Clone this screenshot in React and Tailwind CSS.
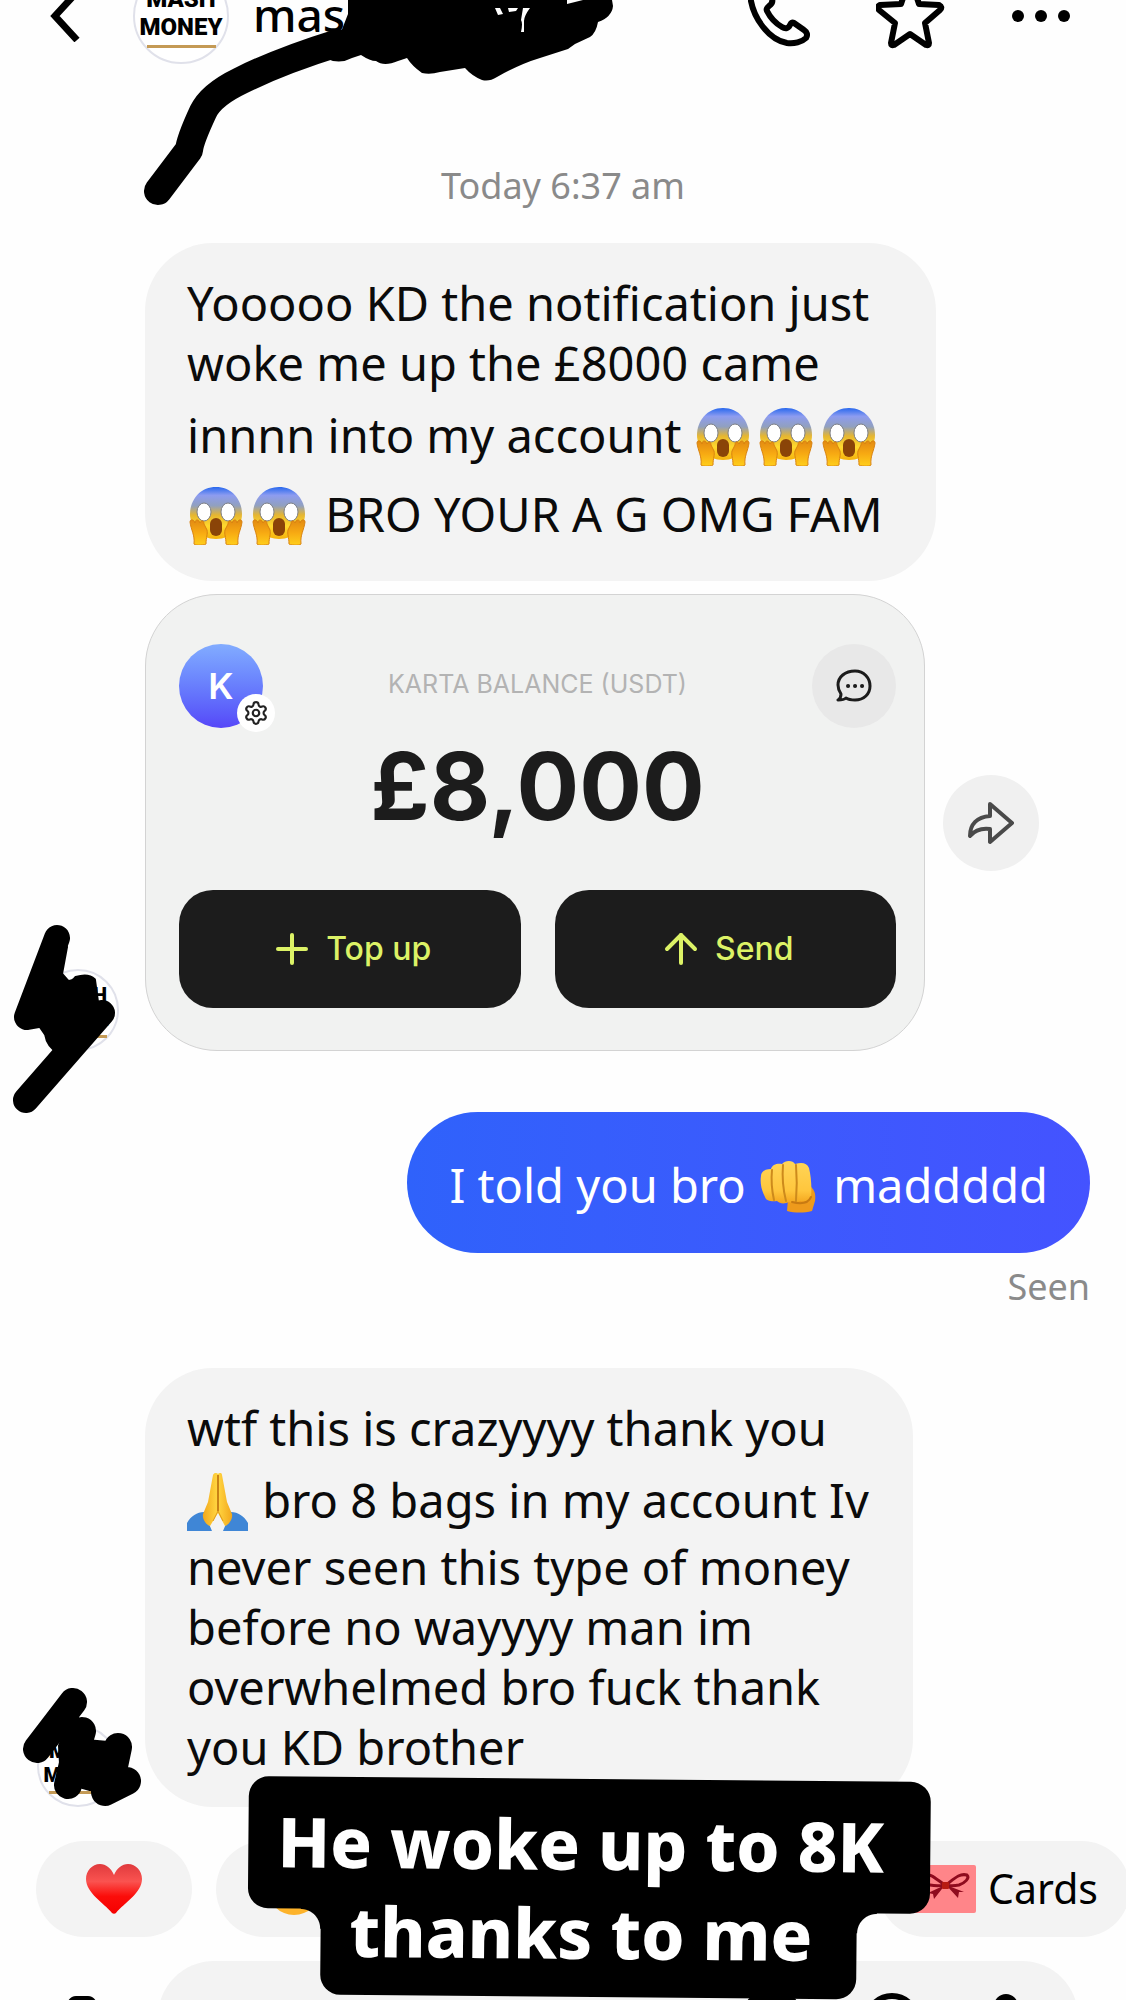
import React, { useId } from 'react';
import { ArrowUp, Plus, Settings } from 'lucide-react';

const emojiClass = 'inline-block h-[58px] w-[63px] mt-[15px] mb-[6px] align-[-19px]';

const Scream = () => {
  const id = useId();
  return (
    <svg viewBox="0 0 63 58" className={emojiClass} role="img" aria-label="screaming face">
      <defs>
        <linearGradient id={`${id}-head`} x1="0" y1="0" x2="0" y2="1">
          <stop offset="0" stopColor="#2868ee" />
          <stop offset="0.16" stopColor="#8d9cf0" />
          <stop offset="0.36" stopColor="#91a0bf" />
          <stop offset="0.54" stopColor="#e6b630" />
          <stop offset="0.75" stopColor="#ffd92e" />
          <stop offset="1" stopColor="#f5b20d" />
        </linearGradient>
        <linearGradient id={`${id}-hand`} x1="0" y1="0" x2="0" y2="1">
          <stop offset="0" stopColor="#e28a12" />
          <stop offset="0.5" stopColor="#f7a912" />
          <stop offset="1" stopColor="#ffcf1c" />
        </linearGradient>
      </defs>
      <path d="M29 0C13 0 3 13 3 27c0 13 10 25 26 25S55 40 55 27C55 13 45 0 29 0Z" fill={`url(#${id}-head)`} />
      <ellipse cx="17" cy="25" rx="7" ry="9" fill="#fff" stroke="#7d7f86" strokeWidth="1" />
      <ellipse cx="41" cy="25" rx="7" ry="9" fill="#fff" stroke="#7d7f86" strokeWidth="1" />
      <rect x="23" y="31" width="12" height="18" rx="6" fill="#8a4408" />
      <path d="M3 35c0-3 4-3 5 1 0-4 4-4 5 0 1-3 4-3 4 1l3 6c1 4-1 7-1 14 0 1-11 2-12 0C8 48 4 43 3 35Z" fill={`url(#${id}-hand)`} stroke="#d98210" strokeWidth="1" />
      <path d="M55 35c0-3-4-3-5 1 0-4-4-4-5 0-1-3-4-3-4 1l-3 6c-1 4 1 7 1 14 0 1 11 2 12 0C50 48 54 43 55 35Z" fill={`url(#${id}-hand)`} stroke="#d98210" strokeWidth="1" />
    </svg>
  );
};

const Fist = () => (
  <svg viewBox="0 0 63 58" className={emojiClass} role="img" aria-label="fist">
    <defs>
      <linearGradient id="fist" x1="0" y1="0" x2="0" y2="1">
        <stop offset="0" stopColor="#ffd558" />
        <stop offset="0.7" stopColor="#ffc63d" />
        <stop offset="1" stopColor="#f3a51d" />
      </linearGradient>
    </defs>
    <path d="M48 26c9 4 10 10 9 17l-3 10c-8 2-17 2-25 0l1-12Z" fill="#ee9a1c" />
    <path d="M3 18c0-5 5-7 10-7 1-5 7-6 11-5 3-4 11-4 13 0 7-2 12-1 14 4 2 8 3 20 2 28-1 5-6 6-11 5-3 2-8 3-11 1-4 2-9 2-12-1-5 1-11 0-12-4C3 31 2 24 3 18Z" fill="url(#fist)" />
    <path d="M14 12c-1 10 0 21 2 30M25 7c-1 12 0 24 3 36M38 7c1 12 1 24 0 36" fill="none" stroke="#cd8a1c" strokeWidth="2" strokeLinecap="round" />
    <path d="M34 44c8 2 16 2 19-5" fill="none" stroke="#c87a12" strokeWidth="2" strokeLinecap="round" />
  </svg>
);

const Pray = () => (
  <svg viewBox="0 0 63 58" className={emojiClass} role="img" aria-label="folded hands">
    <defs>
      <linearGradient id="pray" x1="0" y1="0" x2="1" y2="0">
        <stop offset="0" stopColor="#f2a71c" />
        <stop offset="0.45" stopColor="#ffd23e" />
        <stop offset="0.55" stopColor="#ffd23e" />
        <stop offset="1" stopColor="#f2a71c" />
      </linearGradient>
    </defs>
    <path d="M0 50c4-7 10-11 17-11l8 19H0ZM61 50c-4-7-10-11-17-11l-8 19h25Z" fill="#3f86d6" />
    <path d="M31 1c-2-2-4-1-5 1l-5 27-5 12c-1 5 3 11 7 12l8-13 7 13c4-1 8-7 7-12l-5-12-5-27c0-2-2-3-4-1Z" fill="url(#pray)" />
    <path d="M31 2v36" stroke="#c98216" strokeWidth="2" />
    <path d="M31 38l-5 10M31 38l5 10" stroke="#e09a1b" strokeWidth="1" />
  </svg>
);

const Heart = () => (
  <svg viewBox="0 0 56 50" className="h-[50px] w-14">
    <defs>
      <linearGradient id="heart" x1="0" y1="0" x2="0" y2="1">
        <stop offset="0" stopColor="#e03a3d" />
        <stop offset="0.35" stopColor="#fa5350" />
        <stop offset="0.65" stopColor="#fb0d0a" />
        <stop offset="1" stopColor="#f50000" />
      </linearGradient>
    </defs>
    <path d="M28 11C25 4 20 0 14 0 6 0 0 7 0 15c0 14 18 24 26 34 1 1 3 1 4 0 8-10 26-20 26-34C56 7 50 0 42 0c-6 0-11 4-14 11Z" fill="url(#heart)" />
  </svg>
);

const Smile = () => (
  <svg viewBox="0 0 54 54" className="size-[54px]">
    <circle cx="27" cy="27" r="26" fill="#fdb32b" />
    <path d="M13 23h28c0 9-6 15-14 15s-14-6-14-15Z" fill="#7a3b10" />
    <path d="M12 16q5-6 10 0M32 16q5-6 10 0" fill="none" stroke="#7a3b10" strokeWidth="3" strokeLinecap="round" />
  </svg>
);

const ThumbsUp = () => (
  <svg viewBox="0 0 54 54" className="size-[54px]">
    <path d="M6 26h10L27 6c6-2 8 3 6 9l-2 8h14c6 0 6 6 3 8 2 3 1 6-2 7 1 3 0 6-3 6 0 3-2 5-5 5H24c-4 0-6-3-9-3H6Z" fill="#fdc52f" />
  </svg>
);

const GiftCard = () => (
  <svg viewBox="0 0 66 48" className="h-12 w-[66px]">
    <rect width="66" height="48" rx="2" fill="#ff8589" />
    <path d="M35 20C26 14 21 8 12 9 6 11 12 19 20 20c5 1 10 1 15 0ZM36 20C44 14 49 8 57 10 60 13 55 18 49 20c-5 1-9 1-13 0Z" fill="none" stroke="#8f0b1e" strokeWidth="3" />
    <path d="M35 20 18 28l5 1 1 5ZM36 20l12 13 1-6 5 0Z" fill="#8f0b1e" />
    <rect x="32" y="17" width="7" height="7" rx="1" fill="#b81a12" />
  </svg>
);

const ChatDots = () => (
  <svg viewBox="0 0 36 34" className="h-[34px] w-9" fill="none" stroke="#1c1c1c" strokeWidth="3" strokeLinejoin="round" strokeLinecap="round">
    <path d="M19 2C9 2 2 8 2 16c0 4 1 6 3 9 0 3-1 5-3 6 4 0 6 0 8-2 3 2 6 2 9 2 9 0 15-6 15-14S28 2 19 2Z" />
    <path d="M12 17h.1M19 17h.1M26 17h.1" strokeWidth="4" />
  </svg>
);

const ShareArrow = () => (
  <svg viewBox="0 0 46 44" className="h-11 w-[46px]" fill="none" stroke="#4a4a4a" strokeWidth="4" strokeLinejoin="round">
    <path d="M22 3 44 22 22 41V28C14 27 7 29 2 35 2 23 9 16 22 15Z" />
  </svg>
);

const Scribble = ({ viewBox, line, fill, width }) => (
  <svg viewBox={viewBox} className="absolute inset-0 size-full overflow-visible" aria-hidden="true">
    <path d={line} fill="none" stroke="#000" strokeWidth={width} strokeLinecap="round" strokeLinejoin="round" />
    <path d={fill} fill="#000" stroke="#000" strokeWidth="4" strokeLinejoin="round" />
  </svg>
);

const Avatar = ({ large = false, children }) => (
  <div className={large ? 'relative size-24 shrink-0' : 'relative size-[82px] shrink-0'}>
    <div className="flex size-full flex-col items-center justify-center rounded-full border-2 border-[#e0e1ea] bg-white font-[Roboto,sans-serif] font-black text-black">
      <span className={large ? 'text-2xl leading-[28px]' : 'text-xl leading-6'}>MASH</span>
      <span className={large ? 'text-2xl leading-[28px]' : 'text-xl leading-6'}>MONEY</span>
      <span className="mt-1 h-[3px] w-3/4 bg-[#c49a55]" />
    </div>
    {children}
  </div>
);

const Bubble = ({ children }) => (
  <div className="w-full rounded-[68px] bg-[#f3f3f3] px-[42px] py-[30px] text-[47px] leading-[60px] text-[#0b0b0b]">
    {children}
  </div>
);

const BalanceCard = () => (
  <div className="w-[780px] rounded-[72px] border border-[#d3d3d3] bg-[#f1f2f1] pt-[49px] pr-7 pb-[42px] pl-[33px] font-[Inter,sans-serif]">
    <div className="flex items-start justify-between">
      <div className="relative flex size-[84px] items-center justify-center rounded-full bg-linear-to-b from-[#82acff] to-[#5646f8] text-[36px] font-semibold text-white">
        K
        <span className="absolute -right-3 -bottom-1 flex size-[38px] items-center justify-center rounded-full bg-white">
          <Settings size={26} strokeWidth={2} className="text-[#222]" />
        </span>
      </div>
      <div className="flex flex-col items-center pt-[25px]">
        <p className="text-[25px] leading-[30px] text-[#b3b3b3]">KARTA BALANCE (USDT)</p>
        <p className="mt-[38px] text-[93px] leading-[98px] font-bold text-[#1c1c1c]">£8,000</p>
      </div>
      <button aria-label="Support chat" className="flex size-[84px] items-center justify-center rounded-full bg-[#e8e8e8]">
        <ChatDots />
      </button>
    </div>
    <div className="mt-[55px] grid grid-cols-2 gap-[34px] text-[32px] font-medium text-[#dcf266]">
      <button className="flex h-[118px] items-center justify-center gap-[10px] rounded-[34px] bg-[#1c1c1c]">
        <Plus size={48} strokeWidth={2} />
        Top up
      </button>
      <button className="flex h-[118px] items-center justify-center gap-[10px] rounded-[34px] bg-[#1c1c1c]">
        <ArrowUp size={48} strokeWidth={2} />
        Send
      </button>
    </div>
  </div>
);

const Header = () => (
  <header className="relative -mt-8 flex h-24 shrink-0 items-center pr-14 pl-[50px]">
    <button aria-label="Back">
      <svg viewBox="0 0 30 52" className="h-[52px] w-[30px]" fill="none" stroke="#000" strokeWidth="7">
        <path d="M27 2 5 26l22 24" />
      </svg>
    </button>
    <div className="ml-[53px]">
      <Avatar large />
    </div>
    <h1 className="ml-6 pb-1 text-[46px] leading-[46px] font-medium">mas</h1>
    <div className="ml-auto flex items-center gap-16">
      <button aria-label="Call">
        <svg viewBox="0 0 64 64" className="size-16" fill="none" stroke="#000" strokeWidth="6" strokeLinejoin="round">
          <path d="M2 10C4 35 22 56 39 59c7 1 15-1 19-5 2-3 1-6-2-8l-10-7c-2-1-3 0-4 2-2 4-5 4-8 2-7-4-12-10-15-16-1-2 0-3 2-5 3-2 4-4 3-7L18 4C16 0 6 2 2 10Z" />
        </svg>
      </button>
      <button aria-label="Favourite">
        <svg viewBox="0 0 72 72" className="size-[72px]" fill="none" stroke="#000" strokeWidth="6" strokeLinejoin="round">
          <path d="M31 6q3-4 6 0l6 18 20 1q4 2 1 5L49 43l4 20q0 3-3 2L34 54 18 65q-3 1-3-2l4-20L3 30q-3-3 1-5l21-1Z" />
        </svg>
      </button>
      <button aria-label="More">
        <svg viewBox="0 0 58 12" className="h-3 w-[58px]">
          <circle cx="6" cy="6" r="6" />
          <circle cx="29" cy="6" r="6" />
          <circle cx="52" cy="6" r="6" />
        </svg>
      </button>
    </div>
  </header>
);

const Composer = () => (
  <form className="mt-6 flex shrink-0 items-start pr-12 pl-[54px]" onSubmit={(e) => e.preventDefault()}>
    <button type="button" aria-label="Camera" className="mt-[35px] w-[60px] shrink-0">
      <svg viewBox="0 0 60 48" className="h-12 w-[60px]">
        <path d="M14 5q3-5 8-5h12q5 0 8 5l4 6q10 0 10 10v16q0 10-10 10H12Q2 47 2 37V21q0-10 10-10Z" />
      </svg>
    </button>
    <div className="ml-11 flex h-28 min-w-0 flex-1 items-start rounded-full bg-[#f3f3f3] pr-[54px]">
      <input aria-label="Message" className="h-28 w-0 flex-1 bg-transparent pl-11 text-[40px] outline-none" />
      <svg viewBox="0 0 280 60" className="mt-8 h-[60px] w-[280px] shrink-0" fill="none" stroke="#000" strokeWidth="6">
        <rect x="5" y="5" width="46" height="46" rx="8" />
        <circle cx="148" cy="28" r="25" />
        <rect x="253" y="4" width="18" height="34" rx="9" />
      </svg>
    </div>
  </form>
);

const Caption = () => (
  <div className="absolute inset-x-0 bottom-[3px] flex justify-center pl-[52px]">
    <div className="flex rotate-[0.5deg] flex-col items-center text-[69px] leading-[82px] font-extrabold text-white">
      <p className="rounded-[20px] bg-black pt-[23px] pr-[46px] pb-[27px] pl-[29px]">He woke up to 8K</p>
      <p className="relative -mt-5 rounded-b-[20px] bg-black pr-[44px] pb-[24px] pl-[29px]">
        <span className="absolute top-[19px] -left-5 size-[21px] bg-[radial-gradient(circle_at_0_100%,transparent_19px,#000_20px)]" />
        <span className="absolute top-[19px] -right-5 size-[21px] bg-[radial-gradient(circle_at_100%_100%,transparent_19px,#000_20px)]" />
        thanks to me
      </p>
    </div>
  </div>
);

export default function App() {
  return (
    <div className="relative flex h-screen flex-col overflow-hidden bg-[#fefefe] font-['Noto_Sans',sans-serif] text-black">
      <Header />

      {/* marker stroke over the username */}
      <svg viewBox="0 0 640 220" className="absolute top-0 left-0 h-[220px] w-[640px]" aria-hidden="true">
        <path d="M158 191 189 150Q190 140 203 112 211 95 240 81 280 61 338 43" fill="none" stroke="#000" strokeWidth="28" strokeLinecap="round" strokeLinejoin="round" />
        <path d="M348 0V14L341 32 325 42V58q14 7 27 0l9-3q9 6 15 6 8 6 22 0l9-3q5 8 15 15 8 2 18-1l25-4q7 8 17 12 7 2 15-3 23-13 43-19l28-9 7-5 15-7q6-4 8-15 14-5 15-16l-1-6h-29l-16 4V0Z" />
        <path d="M495 8l5 0 3 6-5 1ZM508 8h10l-2 3-7 1ZM523 8h7q-6 8-6 13l0 11-3 0q2-9 0-12Z" fill="#fff" />
      </svg>

      <main className="flex shrink-0 flex-col pt-[98px]">
        <p className="text-center text-[36px] leading-[48px] text-[#8a8a8a]">Today 6:37 am</p>

        <div className="mt-[33px] flex items-end gap-[26px] pl-[37px]">
          <Avatar>
            <Scribble
              viewBox="37 970 82 82"
              width={26}
              line="M57 939 27 1018 50 1014M26 1101 102 1014"
              fill="M66 948 61 975l7 8q5 0 8-4 12-4 18 2l3 22 11 5-2 14-30 30-16 2q-12-6-14-19L30 1012Z"
            />
          </Avatar>
          <div className="flex flex-col gap-[13px]">
            <div className="w-[791px]">
              <Bubble>
                Yooooo KD the notification just
                <br />
                woke me up the £8000 came
                <br />
                innnn into my account <Scream /><Scream /><Scream />
                <br />
                <Scream /><Scream /> BRO YOUR A G OMG FAM
              </Bubble>
            </div>
            <div className="flex items-center gap-[18px]">
              <BalanceCard />
              <button aria-label="Share" className="flex size-24 items-center justify-center rounded-full bg-[#f0f0f0]">
                <ShareArrow />
              </button>
            </div>
          </div>
        </div>

        <div className="mt-[61px] flex flex-col items-end pr-9">
          <div className="rounded-[71px] bg-linear-to-r from-[#2f62fb] to-[#4453ff] px-[42px] py-[31px] text-[47px] leading-[60px] text-white">
            I told you bro <Fist /> maddddd
          </div>
          <p className="mt-[10px] text-[36px] leading-[48px] text-[#8a8a8a]">Seen</p>
        </div>

        <div className="mt-[57px] flex items-end gap-[26px] pl-[37px]">
          <Avatar>
            <Scribble
              viewBox="37 1724 82 82"
              width={28}
              line="M73 1701 37 1748M82 1730 76 1750 68 1784M118 1746 114 1765M127 1780 105 1791"
              fill="M72 1712 86 1740 108 1742 122 1765 118 1788 90 1788 62 1780 60 1745Z"
            />
          </Avatar>
          <div className="w-[768px]">
            <Bubble>
              wtf this is crazyyyy thank you
              <br />
              <Pray /> bro 8 bags in my account Iv
              <br />
              never seen this type of money
              <br />
              before no wayyyy man im
              <br />
              overwhelmed bro fuck thank
              <br />
              you KD brother
            </Bubble>
          </div>
        </div>
      </main>

      <div className="mt-[34px] flex shrink-0 gap-6 pl-9">
        <button aria-label="Send heart" className="flex h-24 w-[156px] items-center justify-center rounded-full bg-[#f3f3f3]">
          <Heart />
        </button>
        <button aria-label="Send smile" className="flex h-24 w-[156px] items-center justify-center rounded-full bg-[#f3f3f3]">
          <Smile />
        </button>
        <button aria-label="Send thumbs up" className="flex h-24 w-[156px] items-center justify-center rounded-full bg-[#f3f3f3]">
          <ThumbsUp />
        </button>
        <button className="-mr-1 ml-auto flex h-24 items-center gap-3 rounded-full bg-[#f3f3f3] px-8 text-[41px]">
          <GiftCard />
          Cards
        </button>
      </div>

      <Composer />

      <Caption />
    </div>
  );
}
